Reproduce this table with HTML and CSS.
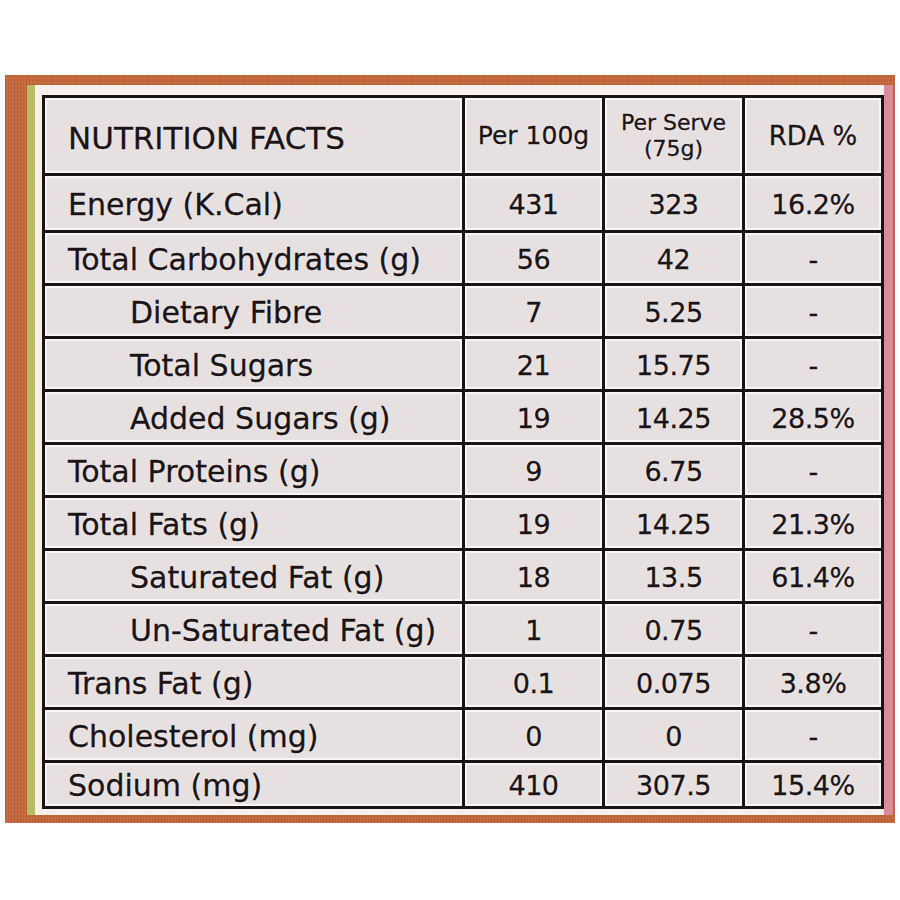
FILE: index.html
```html
<!DOCTYPE html>
<html lang="en">
<head>
<meta charset="utf-8">
<title>Nutrition Facts</title>
<link rel="stylesheet" href="styles.css">
</head>
<body>
<div class="frame">
  <div class="paper">
    <table class="facts">
      <colgroup>
        <col class="c-name"><col class="c-num"><col class="c-num"><col class="c-rda">
      </colgroup>
      <thead>
        <tr class="head">
          <th class="title">NUTRITION FACTS</th>
          <th class="h100">Per 100g</th>
          <th class="hserve">Per Serve<br>(75g)</th>
          <th class="hrda">RDA %</th>
        </tr>
      </thead>
      <tbody>
        <tr class="first"><td class="name">Energy (K.Cal)</td><td>431</td><td>323</td><td>16.2%</td></tr>
        <tr><td class="name">Total Carbohydrates (g)</td><td>56</td><td>42</td><td>-</td></tr>
        <tr><td class="name sub">Dietary Fibre</td><td>7</td><td>5.25</td><td>-</td></tr>
        <tr><td class="name sub">Total Sugars</td><td>21</td><td>15.75</td><td>-</td></tr>
        <tr><td class="name sub">Added Sugars (g)</td><td>19</td><td>14.25</td><td>28.5%</td></tr>
        <tr><td class="name">Total Proteins (g)</td><td>9</td><td>6.75</td><td>-</td></tr>
        <tr><td class="name">Total Fats (g)</td><td>19</td><td>14.25</td><td>21.3%</td></tr>
        <tr><td class="name sub">Saturated Fat (g)</td><td>18</td><td>13.5</td><td>61.4%</td></tr>
        <tr><td class="name sub">Un-Saturated Fat (g)</td><td>1</td><td>0.75</td><td>-</td></tr>
        <tr><td class="name">Trans Fat (g)</td><td>0.1</td><td>0.075</td><td>3.8%</td></tr>
        <tr><td class="name">Cholesterol (mg)</td><td>0</td><td>0</td><td>-</td></tr>
        <tr class="last"><td class="name">Sodium (mg)</td><td>410</td><td>307.5</td><td>15.4%</td></tr>
      </tbody>
    </table>
  </div>
</div>
</body>
</html>
```

FILE: styles.css
```css
html, body {
  margin: 0;
  padding: 0;
  background: #ffffff;
}

body {
  font-family: "DejaVu Sans", "Liberation Sans", sans-serif;
  color: #1b1416;
}

.frame {
  margin: 75px 0 0 5px;
  width: 890px;
  height: 748px;
  box-sizing: border-box;
  padding: 10px 2px 8px 22px;
  background-color: #c4683d;
  background-image:
    repeating-linear-gradient(90deg, rgba(120, 50, 20, 0.18) 0 1px, transparent 1px 3px),
    repeating-linear-gradient(0deg, rgba(230, 150, 90, 0.22) 0 1px, transparent 1px 4px);
}

.paper {
  height: 100%;
  box-sizing: border-box;
  background: #f5f0ec;
  border-left: 8px solid #b8bd63;
  border-right: 9px solid #d98b99;
  padding: 10px 0 6px 7px;
}

.facts {
  width: 839px;
  height: 714px;
  border-collapse: collapse;
  table-layout: fixed;
  border: 3px solid #1b1214;
}

.c-name { width: 420px; }
.c-num { width: 140px; }
.c-rda { width: 139px; }

.facts th,
.facts td {
  border: 3px solid #1b1214;
  background: #e7e0e1;
  box-shadow: inset 0 0 0 2px #f8f5f5;
  text-align: center;
  vertical-align: middle;
  padding: 0;
  font-weight: normal;
  -webkit-text-stroke: 0.35px #1b1416;
  text-shadow: 0 0 1px #ffffff, 0 0 2px #ffffff;
}

.head { height: 78px; }
.facts tbody tr { height: 53px; }
.facts tbody tr.first { height: 57px; }
.facts tbody tr.last { height: 46px; }

.facts .title {
  text-align: left;
  padding-left: 23px;
  padding-top: 4px;
  font-size: 31px;
}

.h100 {
  font-size: 25px;
  padding-top: 4px;
}

.hserve {
  font-size: 22px;
  line-height: 26px;
  padding-bottom: 2px;
}

.hrda {
  font-size: 26px;
  padding-top: 4px;
}

.facts td {
  font-size: 27px;
  letter-spacing: -0.5px;
  padding-top: 2px;
}

.facts td.name {
  text-align: left;
  padding-left: 23px;
  font-size: 30px;
  letter-spacing: 0;
}

.facts td.sub {
  padding-left: 85px;
}
```
